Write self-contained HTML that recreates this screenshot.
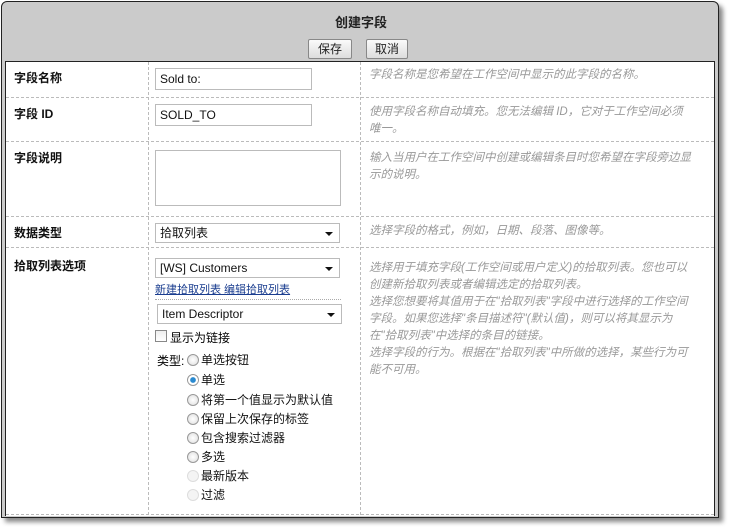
<!DOCTYPE html>
<html><head><meta charset="utf-8"><style>
*{box-sizing:border-box}
body{margin:0;width:735px;height:530px;background:#fff;font-family:"Liberation Sans","Noto Sans CJK SC",sans-serif;font-size:12px;position:relative;overflow:hidden}
.frame{position:absolute;left:1px;top:1px;width:718px;height:517px;background:#cbcbcb;border:1px solid #222;border-radius:6px 6px 0 0;box-shadow:4px 4px 5px #888}
.title{position:absolute;left:0;width:718px;top:10px;text-align:center;font-weight:bold;font-size:13px;color:#222}
.btn{position:absolute;top:37px;height:20px;border:1px solid #888;border-radius:2px;background:linear-gradient(#fafafa,#ddd);font-size:12px;text-align:center;line-height:18px;color:#222}
.panel{position:absolute;left:5px;top:61px;width:710px;height:455px;background:#fff;border-top:1px solid #222;border-left:1px solid #222;border-right:1px solid #222}
.hl{position:absolute;left:0;width:708px;border-top:1px dashed #bbb}
.vl{position:absolute;top:0;height:453px;border-left:1px dashed #bbb}
.lab{position:absolute;left:8px;font-weight:bold;font-size:12px;color:#111}
.desc{position:absolute;left:363px;width:322px;font-style:italic;color:#999;font-size:11.5px;line-height:17px}
.inp{position:absolute;border:1px solid #bbb;background:#fff;height:22px;padding-left:4px;line-height:20px;font-size:12px;color:#111}
.sel{position:absolute;border:1px solid #bbb;background:#fff;height:20px;padding-left:4px;line-height:18px;font-size:12px;color:#111}
.sel:after{content:"";position:absolute;right:6px;top:8px;border:4px solid transparent;border-top:4px solid #111;border-bottom:0}
.opt{position:absolute;left:195px;font-size:12px;color:#111;line-height:16px}
.r{position:absolute;left:-14px;top:2px;width:12px;height:12px;border-radius:50%;border:1px solid #999;background:radial-gradient(#fff,#ddd)}
</style></head><body>
<div class="frame">
<div class="title">创建字段</div>
<div class="btn" style="left:306px;width:44px">保存</div>
<div class="btn" style="left:364px;width:42px">取消</div>
</div>
<div class="panel">
<div class="vl" style="left:142px"></div>
<div class="vl" style="left:354px"></div>
<div class="hl" style="top:35px"></div>
<div class="hl" style="top:79px"></div>
<div class="hl" style="top:154px"></div>
<div class="hl" style="top:185px"></div>
<div class="hl" style="top:452px"></div>
<div class="lab" style="top:7px">字段名称</div>
<div class="lab" style="top:43px">字段 ID</div>
<div class="lab" style="top:87px">字段说明</div>
<div class="lab" style="top:162px">数据类型</div>
<div class="lab" style="top:195px">拾取列表选项</div>
<div class="inp" style="left:149px;top:6px;width:157px">Sold to:</div>
<div class="inp" style="left:149px;top:42px;width:157px">SOLD_TO</div>
<div class="inp" style="left:149px;top:88px;width:186px;height:56px"></div>
<div class="sel" style="left:149px;top:161px;width:185px">拾取列表</div>
<div class="sel" style="left:149px;top:196px;width:185px">[WS] Customers</div>
<div style="position:absolute;left:149px;top:219px;font-size:11px;color:#1a3d8f;text-decoration:underline">新建拾取列表 编辑拾取列表</div>
<div style="position:absolute;left:149px;top:237px;width:186px;border-top:1px dotted #aaa"></div>
<div class="sel" style="left:151px;top:242px;width:185px">Item Descriptor</div>
<div style="position:absolute;left:149px;top:268px;width:12px;height:12px;border:1px solid #888;background:linear-gradient(#eee,#fff)"></div>
<div style="position:absolute;left:164px;top:267px">显示为链接</div>
<div style="position:absolute;left:151px;top:290px">类型:</div>
<div class="opt" style="top:290px"><span class="r"></span>单选按钮</div>
<div class="opt" style="top:310px"><span class="r" style="background:radial-gradient(#2a8ad0 35%,#fff 45%)"></span>单选</div>
<div class="opt" style="top:330px"><span class="r"></span>将第一个值显示为默认值</div>
<div class="opt" style="top:349px"><span class="r"></span>保留上次保存的标签</div>
<div class="opt" style="top:368px"><span class="r"></span>包含搜索过滤器</div>
<div class="opt" style="top:387px"><span class="r"></span>多选</div>
<div class="opt" style="top:406px"><span class="r" style="border-color:#ddd;background:#f4f4f4"></span>最新版本</div>
<div class="opt" style="top:425px"><span class="r" style="border-color:#ddd;background:#f4f4f4"></span>过滤</div>
<div class="desc" style="top:5px">字段名称是您希望在工作空间中显示的此字段的名称。</div>
<div class="desc" style="top:42px">使用字段名称自动填充。您无法编辑 ID，它对于工作空间必须唯一。</div>
<div class="desc" style="top:88px">输入当用户在工作空间中创建或编辑条目时您希望在字段旁边显示的说明。</div>
<div class="desc" style="top:161px">选择字段的格式，例如，日期、段落、图像等。</div>
<div class="desc" style="top:198px">选择用于填充字段(工作空间或用户定义)的拾取列表。您也可以创建新拾取列表或者编辑选定的拾取列表。</div>
<div class="desc" style="top:232px">选择您想要将其值用于在"拾取列表"字段中进行选择的工作空间字段。如果您选择"条目描述符"(默认值)，则可以将其显示为在"拾取列表"中选择的条目的链接。</div>
<div class="desc" style="top:283px">选择字段的行为。根据在"拾取列表"中所做的选择，某些行为可能不可用。</div>
</div>
</body></html>
